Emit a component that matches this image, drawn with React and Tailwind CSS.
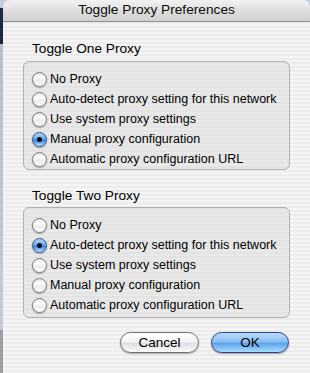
import React from "react";

const font = { fontFamily: '"Liberation Sans", Arial, sans-serif' };

function Radio({ checked }) {
  if (checked) {
    return (
      <div className="relative w-[15px] h-[15px] shrink-0 rounded-full border border-[#34548c] bg-[linear-gradient(to_bottom,#b4d6fb_0%,#78b0ec_40%,#3f84dc_55%,#86c4ff_85%,#b8e4ff_100%)] shadow-[0_1px_1.5px_rgba(0,0,0,0.35)] flex items-center justify-center">
        <div className="w-[5px] h-[5px] rounded-full bg-[#0a0a18]" />
      </div>
    );
  }
  return (
    <div className="w-[15px] h-[15px] shrink-0 rounded-full border border-[#7a7a7a] bg-[linear-gradient(to_bottom,#e6e6e6_0%,#fdfdfd_35%,#ececec_55%,#f6f6f6_80%,#ffffff_100%)] shadow-[0_1px_1.5px_rgba(0,0,0,0.3)]" />
  );
}

const options = [
  "No Proxy",
  "Auto-detect proxy setting for this network",
  "Use system proxy settings",
  "Manual proxy configuration",
  "Automatic proxy configuration URL",
];

function Group({ title, selected, headingGap, bottomPad }) {
  return (
    <div className="flex flex-col">
      <div className={`pl-[9px] h-[16px] leading-[16px] text-[13.7px] text-black ${headingGap}`}>{title}</div>
      <div className={`rounded-[6px] border border-[#b0b0b0] bg-[repeating-linear-gradient(to_bottom,#e3e3e3_0px,#e3e3e3_2px,#e9e9e9_2px,#e9e9e9_4px)] pl-[8px] pt-[7px] ${bottomPad}`}>
        {options.map((o, i) => (
          <div key={o} className="h-[20px] flex items-center gap-[3px]">
            <Radio checked={i === selected} />
            <span className="text-[12.5px] leading-[16px] text-black whitespace-nowrap">{o}</span>
          </div>
        ))}
      </div>
    </div>
  );
}

export default function App() {
  return (
    <div style={font} className="w-[310px] h-[373px] flex bg-[#c8d2de] overflow-hidden">
      <div className="w-[3px] h-full bg-[linear-gradient(to_bottom,#c4ccd8_0px,#c4ccd8_8px,#1c2846_8px,#1c2846_44px,#b9bec8_44px,#c6cad2_330px,#9c9ea2_330px)]" />
      <div className="flex-1 flex flex-col rounded-t-[7px] overflow-hidden">
        <div className="h-[22px] shrink-0 border-b border-[#8e8e8e] bg-[linear-gradient(to_bottom,#f2f2f2_0%,#dedede_50%,#d0d0d0_100%)] flex items-center justify-center text-[13.7px] text-[#0c0c0c]">
          Toggle Proxy Preferences
        </div>
        <div className="flex-1 flex flex-col px-[20px] bg-[repeating-linear-gradient(to_bottom,#ececec_0px,#ececec_2px,#f4f4f4_2px,#f4f4f4_4px)]">
          <Group title="Toggle One Proxy" selected={3} headingGap="mt-[19px] mb-[4px]" bottomPad="pb-[0px]" />
          <Group title="Toggle Two Proxy" selected={1} headingGap="mt-[18px] mb-[3px]" bottomPad="pb-[2px]" />
          <div className="flex justify-end gap-[12px] mt-[14px] pr-[1px]">
            <button className="w-[79px] h-[21px] rounded-full border border-[#707070] bg-[linear-gradient(to_bottom,#ffffff_0%,#f4f4f4_45%,#e0e0e0_55%,#fbfbfb_100%)] shadow-[0_1px_1.5px_rgba(0,0,0,0.3)] text-[13.5px] leading-[16px] text-black">
              Cancel
            </button>
            <button className="w-[78px] h-[21px] rounded-full border border-[#2e3f88] bg-[linear-gradient(to_bottom,#bcdcfb_0%,#8cc0f2_45%,#5ea4ec_55%,#a6dcff_100%)] shadow-[0_1px_1.5px_rgba(0,0,0,0.35)] text-[13.5px] leading-[16px] text-black">
              OK
            </button>
          </div>
        </div>
      </div>
    </div>
  );
}
